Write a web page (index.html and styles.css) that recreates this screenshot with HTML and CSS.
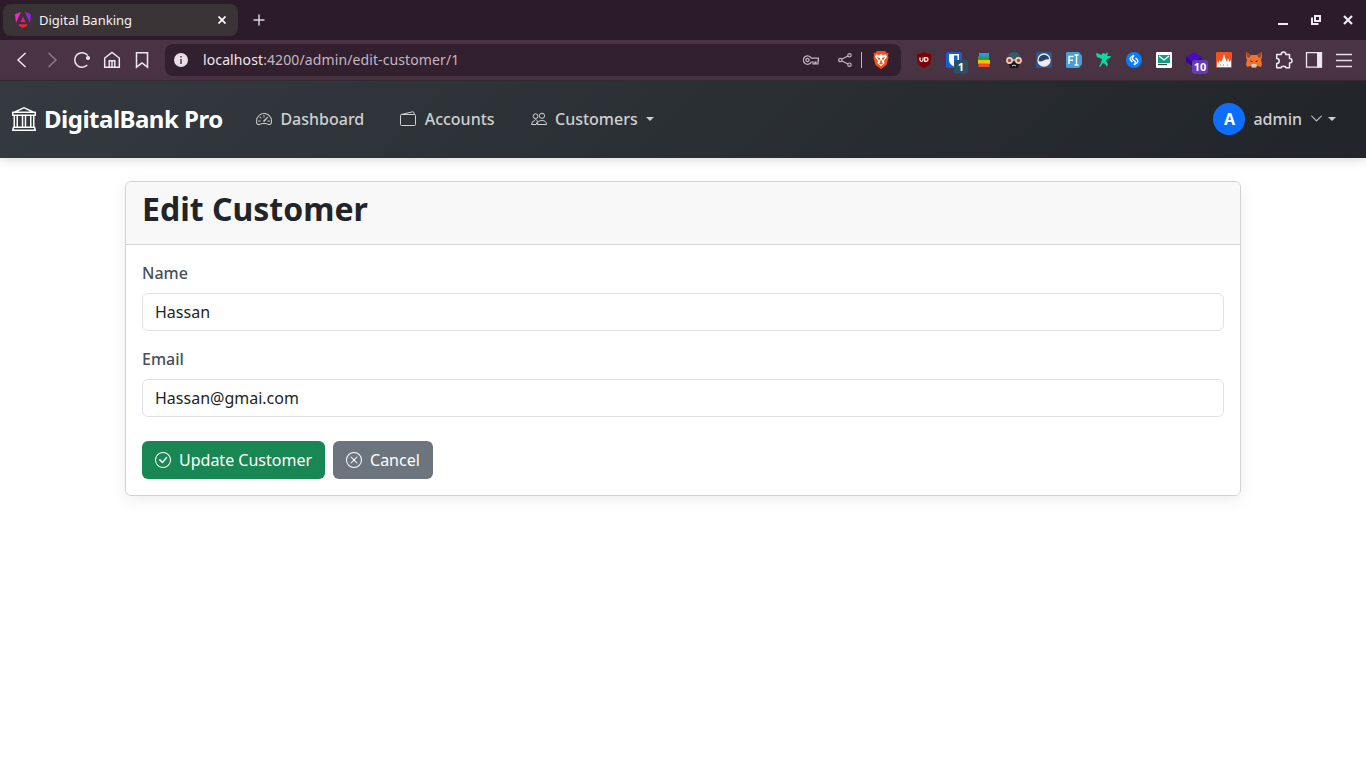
FILE: index.html
```html
<!DOCTYPE html>
<html lang="en">
<head>
<meta charset="utf-8">
<title>Digital Banking</title>
<link rel="stylesheet" href="styles.css">
</head>
<body>
<div class="tabbar">
  <div class="tab">
    <svg class="tab-logo" width="16" height="16" viewBox="0 0 16 16"><defs><linearGradient id="ng" x1="0" y1="0" x2="1" y2="0"><stop offset="0" stop-color="#f52bc4"/><stop offset=".5" stop-color="#e620cf"/><stop offset="1" stop-color="#7a22ef"/></linearGradient></defs><path d="M6 0 0 2.3 1 11zM10 0l6 2.3-1 8.7z" fill="url(#ng)"/><path d="M8 4.5 5.5 10h5z" fill="#e91788"/><path d="M4 12.2h8l.5 1.5L8 16l-4.500-2.300z" fill="#fa1742"/></svg>
    <span class="tab-title">Digital Banking</span>
    <svg class="tab-close" width="8" height="8" viewBox="0 0 8 8"><path d="m.5.5 7 7m0-7-7 7" stroke="#fff" stroke-width="1.700"/></svg>
  </div>
  <svg class="newtab" width="12" height="12" viewBox="0 0 12 12"><path d="M6 .5v11M.5 6h11" stroke="#d8d2d7" stroke-width="1.500"/></svg>
  <div class="window-controls">
    <svg width="10" height="10" viewBox="0 0 10 10"><path d="M0 8h10v2H0z" fill="#eeeaf0"/></svg>
    <svg width="10" height="10" viewBox="0 0 10 10"><path d="M4 1h5v5H4zM1 2.500V9h6.500" fill="none" stroke="#eeeaf0" stroke-width="2"/></svg>
    <svg width="10" height="10" viewBox="0 0 10 10"><path d="m1 1 8 8m0-8L1 9" stroke="#eeeaf0" stroke-width="2.200"/></svg>
  </div>
</div>
<div class="toolbar">
  <div class="nav-buttons">
    <svg width="20" height="20" viewBox="0 0 20 20"><path d="m13.500 3-7.500 7 7.500 7"/></svg>
    <svg class="dim" width="20" height="20" viewBox="0 0 20 20"><path d="m6.500 3 7.500 7-7.500 7"/></svg>
    <svg width="20" height="20" viewBox="0 0 20 20"><path d="M15.300 15a7.300 7.300 0 1 1 .5-9.500"/><circle cx="16" cy="8" r="2.100" fill="#eee6ed" stroke="none"/></svg>
    <svg width="20" height="20" viewBox="0 0 20 20"><path d="M2.700 8 10 2.500 17.300 8v9.300h-4.500v-6.500H7.200v6.500H2.700zM10 11v6.300M7.200 17.300h5.600"/></svg>
    <svg width="20" height="20" viewBox="0 0 20 20"><path d="M4.500 2.700h11v14.500L10 13l-5.500 4.200z"/></svg>
  </div>
  <div class="urlbar">
    <svg width="14" height="14" viewBox="0 0 14 14"><circle cx="7" cy="7" r="7" fill="#eadde6"/><path d="M6.200 3h1.600v1.600H6.200zm0 3h1.600v5H6.200z" fill="#554250"/></svg>
    <span class="url">localhost<span class="url-path">:4200/admin/edit-customer/1</span></span>
    <svg class="key" width="16" height="12" viewBox="0 0 16 12" fill="none" stroke="#c3b4be" stroke-width="1.200"><path d="M8.300 4.200A4.200 4.200 0 1 0 8.300 8H10v2h2V8h1v2h2V7h.4V4.200z"/><circle cx="4.500" cy="6" r="1.600"/></svg>
    <svg class="share" width="14" height="14" viewBox="0 0 14 14" fill="none" stroke="#c3b4be" stroke-width="1.200"><path d="m4 6 6-3M4 8l6 3"/><circle cx="2.300" cy="7" r="1.700"/><circle cx="11.500" cy="2.300" r="1.700"/><circle cx="11.500" cy="11.700" r="1.700"/></svg>
    <span class="separator"></span>
    <svg class="brave" width="16" height="18" viewBox="0 0 16 18"><path d="m4 0-1.500 1.700L.5 2l.5 3-.6 1.300L2.500 14 8 18l5.500-4 2.100-7.700L15 5l.5-3-2-.3L12 0z" fill="#fb4d17"/><path d="m3 3.500 3 .4L8 3l2 .9 3-.4L14 6l-3 4 .5 2L8 15.300 4.500 12l.5-2-3-4z" fill="#fff"/><path d="m4 6 3 1v1.500l-1.500.3zm8 0L9 7v1.500l1.500.3zM8 8l1 3-1 .7-1-.7zM5.800 12 8 11l2.200 1L8 13.800z" fill="#fb4d17"/></svg>
  </div>
  <div class="extensions">
    <svg width="16" height="16" viewBox="0 0 16 16"><path d="M8 0q3 2 7 2v5q0 6-7 9Q1 13 1 7V2q4 0 7-2z" fill="#800000"/><path d="M4 5.500v2.300q0 1.500 1.500 1.500T7 7.800V5.500M8.700 5.600h1q2.300 0 2.300 1.800t-2.300 1.900h-1z" fill="none" stroke="#fff" stroke-width="1.200"/></svg>
    <div class="ext"><svg width="16" height="16" viewBox="0 0 16 16"><rect width="16" height="16" rx="2" fill="#175ddc"/><path d="M3 2h10v6q0 4-5 6.500Q3 12 3 8z" fill="#fff"/><path d="M8 3.500h3.500V8q0 2.500-3.500 4.500z" fill="#175ddc"/></svg><b class="badge badge-teal">1</b></div>
    <svg width="16" height="16" viewBox="0 0 16 16"><path d="M3 1h10v4H3z" fill="#2596f3"/><path d="M2 4.500h11V8H2z" fill="#28a52b"/><path d="M2 8h12v4H2z" fill="#f9be08"/><path d="M2.500 11.500h11V15h-11z" fill="#f5452d"/></svg>
    <svg width="16" height="16" viewBox="0 0 16 16"><path d="M2 7q0-7 6-7t6 7z" fill="#315d67"/><path d="m2 10 2 6h8l2-6z" fill="#16191b"/><path d="M6 14q2-2 4 0" stroke="#ddd" fill="none"/><path d="M5 8h6" stroke="#efb4a2" stroke-width="1.500"/><circle cx="3.500" cy="8.500" r="2.600" fill="#a04a3c" stroke="#f6cdbf" stroke-width="1.600"/><circle cx="12.500" cy="8.500" r="2.600" fill="#a04a3c" stroke="#f6cdbf" stroke-width="1.600"/></svg>
    <svg width="16" height="16" viewBox="0 0 16 16"><rect width="16" height="16" fill="#31558a"/><circle cx="8" cy="8" r="6" fill="#27426e" stroke="#eee" stroke-width="1.300"/><path d="M2 9q3 1 5-.3T14 7q0 7-6 7T2 9z" fill="#eee"/></svg>
    <svg width="16" height="16" viewBox="0 0 16 16"><path d="M1 0h12l3 4v8l-3 4H1l-1-1V1z" fill="#449edb"/><path d="M3 12v-7.500h4.500M3 8.300h4M8.500 3h4m-2 0v10m-2 0h4" fill="none" stroke="#fff" stroke-width="1.400"/></svg>
    <svg width="16" height="16" viewBox="0 0 16 16"><path d="m1 1 4 2 2-2 3 1 1-2 1 2-1 2h4l-1 2-3 1-1 2 2 3-1 3-2-3-2-1-3 4-1-.5L5 11l1-4-5-2-1-3z" fill="#05dca0"/></svg>
    <svg width="16" height="16" viewBox="0 0 16 16"><circle cx="8" cy="8" r="8" fill="#087eff"/><path d="M6.500 10 4.700 8.200q-1.300-1.500 0-2.700L8 3M9.500 6l1.800 1.800q1.300 1.500 0 2.700L8 13M8 3 6.500 5.800q-.5 1 .5 2l2 1.500q1 1 0 2L8 13" stroke="#fff" stroke-width="1.400" fill="none"/></svg>
    <svg width="16" height="16" viewBox="0 0 16 16"><rect width="16" height="16" rx="1" fill="#fff"/><path d="M2 3h12v8H2z" fill="#159b80"/><path d="m3 4 5 4 5-4" stroke="#fff" stroke-width="1.300" fill="none"/><path d="M2 12.500h9" stroke="#444" stroke-width="1.300"/></svg>
    <div class="ext"><svg width="16" height="16" viewBox="0 0 16 16"><path d="m8 0 8 5-8 5-8-5z" fill="#4b0bbd"/><path d="m0 5 8 5 8-5v5l-8 5-8-5z" fill="#37068f"/></svg><b class="badge badge-purple">10</b></div>
    <svg width="16" height="16" viewBox="0 0 16 16"><rect width="16" height="16" rx="1" fill="#f3511f"/><path d="M1 15V9l1.500 2 1-3L5 10l1.500-3L8 2l1.500 5 1.500 3 1-4 1.500 4L15 8v7z" fill="#fff"/><path d="M4 13h1m2 0h1m3 0h1" stroke="#f3511f"/></svg>
    <svg width="16" height="16" viewBox="0 0 16 16"><path d="m0 0 5 3h6l5-3v5l-1 3 1 4-1 3-4-1-1 2H6l-1-2-4 1-1-3 1-4-1-3z" fill="#ee742f"/><path d="m0 0 5 3-2 3-2-1zm16 0-5 3 2 3 2-1z" fill="#a24425"/><path d="m5 13 1-1h4l1 1-1 2H6z" fill="#d6c5b9"/><path d="m4 8 3 2H5zm8 0-3 2h2z" fill="#302126"/></svg>
    <svg width="18" height="18" viewBox="0 0 18 18" fill="none" stroke="#f2ebf1" stroke-width="1.500" stroke-linejoin="round"><path d="M1.700 3.500h4.500q0-2.500 2.300-2.500t2.300 2.500h3.700V7.500q2.500 0 2.500 2.200T14.500 12v4.700h-3.700q0-1.500-2.300-1.500t-2.300 1.500H1.700V12.500q2.500 0 2.500-2.500T1.700 7.500z"/></svg>
    <svg width="18" height="18" viewBox="0 0 18 18"><path d="M1.500 1.700h15v14.500h-15z" fill="none" stroke="#eee7ed" stroke-width="1.300"/><path d="M12 1.500h5v15h-5z" fill="#eee7ed"/></svg>
    <svg width="18" height="18" viewBox="0 0 18 18"><path d="M1 3.500h16M1 9.500h16M1 15.500h16" stroke="#e7dfe5" stroke-width="1.300"/></svg>
  </div>
</div>
<nav class="navbar">
  <a class="brand"><svg width="24" height="24" viewBox="0 0 16 16" fill="currentColor"><path d="m8 0 6.610 3h.89a.5.5 0 0 1 .5.5v2a.5.5 0 0 1-.5.5H15v7a.5.5 0 0 1 .485.380l.5 2a.498.498 0 0 1-.485.620H.5a.498.498 0 0 1-.485-.620l.5-2A.5.5 0 0 1 1 13V6H.5a.5.5 0 0 1-.5-.5v-2A.5.5 0 0 1 .5 3h.890zM3.777 3h8.447L8 1zM2 6v7h1V6zm2 0v7h2.500V6zm3.500 0v7h1V6zm2 0v7H12V6zM13 6v7h1V6zm2-1V4H1v1zm-.390 9H1.390l-.250 1h13.720z"/></svg><span>DigitalBank Pro</span></a>
  <a class="link dashboard"><svg width="16" height="16" viewBox="0 0 16 16" fill="currentColor"><path d="M8 4a.5.5 0 0 1 .5.5V6a.5.5 0 0 1-1 0V4.500A.5.5 0 0 1 8 4M3.732 5.732a.5.5 0 0 1 .707 0l.915.914a.5.5 0 1 1-.708.708l-.914-.915a.5.5 0 0 1 0-.707M2 10a.5.5 0 0 1 .5-.5h1.586a.5.5 0 0 1 0 1H2.500A.5.5 0 0 1 2 10m9.500 0a.5.5 0 0 1 .5-.5h1.500a.5.5 0 0 1 0 1H12a.5.5 0 0 1-.5-.5m.754-4.246a.39.39 0 0 0-.527-.020L7.547 9.310a.91.91 0 1 0 1.302 1.258l3.434-4.297a.39.39 0 0 0-.029-.518z"/><path fill-rule="evenodd" d="M0 10a8 8 0 1 1 15.547 2.661c-.442 1.253-1.845 1.602-2.932 1.250C11.309 13.488 9.475 13 8 13c-1.474 0-3.310.488-4.615.911-1.087.352-2.490.003-2.932-1.250A8 8 0 0 1 0 10m8-7a7 7 0 0 0-6.603 9.329c.203.575.923.876 1.680.630C4.397 12.533 6.358 12 8 12s3.604.532 4.923.960c.757.245 1.477-.056 1.680-.631A7 7 0 0 0 8 3"/></svg><span>Dashboard</span></a>
  <a class="link accounts"><svg width="16" height="16" viewBox="0 0 16 16" fill="none" stroke="currentColor"><rect x=".5" y="3.500" width="15" height="11" rx="1"/><path d="m1 3.500 11.700-2.700q1-.2 1.200.8l.4 1.900"/></svg><span>Accounts</span></a>
  <a class="link customers"><svg width="16" height="16" viewBox="0 0 16 16" fill="none" stroke="currentColor"><circle cx="11" cy="4.800" r="2.600"/><circle cx="4.600" cy="5.200" r="2.400"/><path d="M6.300 13.500h9.200q-.2-4-4.600-4t-4.600 4zM5 13.500H.5q.2-3.500 3.500-4M3.700 7.500l3 2.700-1.700 3.300"/></svg><span>Customers</span><i class="caret"></i></a>
  <a class="link user"><span class="avatar">A</span><span>admin</span><svg width="13" height="13" viewBox="0 0 16 16" fill="currentColor"><path d="M1.646 4.646a.5.5 0 0 1 .708 0L8 10.293l5.646-5.647a.5.5 0 0 1 .708.708l-6 6a.5.5 0 0 1-.708 0l-6-6a.5.5 0 0 1 0-.708" stroke="currentColor" stroke-width=".3"/></svg><i class="caret"></i></a>
</nav>
<main class="card">
  <header class="card-header"><h2>Edit Customer</h2></header>
  <form class="card-body">
    <label for="name">Name</label>
    <input id="name" value="Hassan">
    <label for="email">Email</label>
    <input id="email" value="Hassan@gmai.com">
    <div class="actions">
      <button type="button" class="btn success"><svg width="16" height="16" viewBox="0 0 16 16" fill="currentColor"><path d="M8 15A7 7 0 1 1 8 1a7 7 0 0 1 0 14m0 1A8 8 0 1 0 8 0a8 8 0 0 0 0 16"/><path d="m10.970 4.970-.020.022-3.473 4.425-2.093-2.094a.75.75 0 0 0-1.060 1.060L6.970 11.030a.75.75 0 0 0 1.079-.020l3.992-4.990a.75.75 0 0 0-1.071-1.050"/></svg><span>Update Customer</span></button>
      <button type="button" class="btn secondary"><svg width="16" height="16" viewBox="0 0 16 16" fill="currentColor"><path d="M8 15A7 7 0 1 1 8 1a7 7 0 0 1 0 14m0 1A8 8 0 1 0 8 0a8 8 0 0 0 0 16"/><path d="M4.646 4.646a.5.5 0 0 1 .708 0L8 7.293l2.646-2.647a.5.5 0 0 1 .708.708L8.707 8l2.647 2.646a.5.5 0 0 1-.708.708L8 8.707l-2.646 2.647a.5.5 0 0 1-.708-.708L7.293 8 4.646 5.354a.5.5 0 0 1 0-.708"/></svg><span>Cancel</span></button>
    </div>
  </form>
</main>
</body>
</html>
```
FILE: styles.css
```css
* { box-sizing: border-box; }
body { margin: 0; height: 768px; overflow: hidden; background: #fff; color: #212529; font: 16px/24px "Noto Sans", sans-serif; }
svg { display: block; flex: none; }
.tabbar { display: flex; align-items: center; height: 40px; padding-left: 3px; background: #2c1c29; }
.tab { display: flex; align-items: center; width: 235px; height: 32px; padding: 0 12px; border-radius: 8px; background: #3a3436; }
.tab-title { margin-left: 8px; color: #f5f1f4; font-size: 13px; }
.tab-close { margin-left: auto; }
.newtab { margin-left: 15px; }
.window-controls { display: flex; gap: 22.5px; margin: 0 13px 0 auto; }
.toolbar { display: flex; align-items: center; height: 41px; background: #4a3444; border-bottom: 1px solid #3b2a33; }
.nav-buttons { display: flex; gap: 10px; margin-left: 12px; fill: none; stroke: #eee6ed; stroke-width: 1.5; }
.dim { opacity: .4; }
.urlbar { display: flex; align-items: center; width: 736px; height: 32px; margin-left: 13px; padding: 0 12px 0 9px; border-radius: 8px; background: #33202e; }
.url { margin-left: 15px; font-size: 14px; letter-spacing: .11px; color: #f0e6ed; }
.url-path { color: #c6b6c1; }
.key { margin-left: auto; }
.share { margin-left: 19px; }
.separator { width: 1px; height: 16px; margin-left: 9px; background: #c3b4be; }
.brave { margin-left: 11px; }
.extensions { display: grid; grid-template-columns: repeat(15, 30px); align-items: center; justify-items: center; margin-left: 8px; }
.ext { position: relative; }
.badge { position: absolute; left: 8px; top: 8px; width: 14px; height: 14px; border-radius: 3px; color: #fff; font-size: 11px; line-height: 14px; text-align: center; }
.badge-teal { background: #2b5063; }
.badge-purple { left: 6px; width: 16px; background: #673ab7; }
.navbar { position: relative; display: flex; align-items: center; height: 77px; padding: 0 30px 2px 12px; background: linear-gradient(135deg, #343a40 0%, #212529 100%); color: #ced0d1; box-shadow: 0 2px 10px rgba(0,0,0,.15); }
.brand { display: flex; align-items: center; gap: 8px; width: 244px; color: #fff; font-size: 24px; font-weight: 700; line-height: 36px; letter-spacing: -.5px; white-space: nowrap; }
.link { display: flex; align-items: center; gap: 8.4px; font-weight: 500; }
.accounts, .customers { margin-left: 36px; }
.caret { border: 4.8px solid transparent; border-top-color: currentColor; border-bottom: 0; }
.user { margin-left: auto; gap: 8px; }
.user .caret { margin-left: -3px; }
.avatar { width: 32px; height: 32px; border-radius: 50%; background: #0d6efd; color: #fff; font-weight: 700; line-height: 32px; text-align: center; }
.card { width: 1116px; margin: 23px auto 0; border: 1px solid #d2d2d3; border-radius: 6px; box-shadow: 0 4px 15px rgba(0,0,0,.08); }
.card-header { height: 63px; padding: 8px 16px; border-bottom: 1px solid #d2d2d3; border-radius: 5px 5px 0 0; background: #f8f8f8; }
h2 { margin: 0; font-size: 32px; font-weight: 700; line-height: 38.4px; }
.card-body { padding: 16px; }
label { display: block; margin-bottom: 8px; color: #495057; font-weight: 500; }
input { display: block; width: 100%; height: 38px; margin-bottom: 16px; padding: 6px 12px; border: 1px solid #dee2e6; border-radius: 6px; color: #212529; background: #fff; font: inherit; }
.actions { display: flex; gap: 8px; margin-top: 24px; }
.btn { display: flex; align-items: center; gap: 8px; height: 38px; padding: 0 13px; border: 0; border-radius: 6px; color: #fff; font: inherit; }
.success { background: #198754; }
.secondary { background: #6c757d; }
```
